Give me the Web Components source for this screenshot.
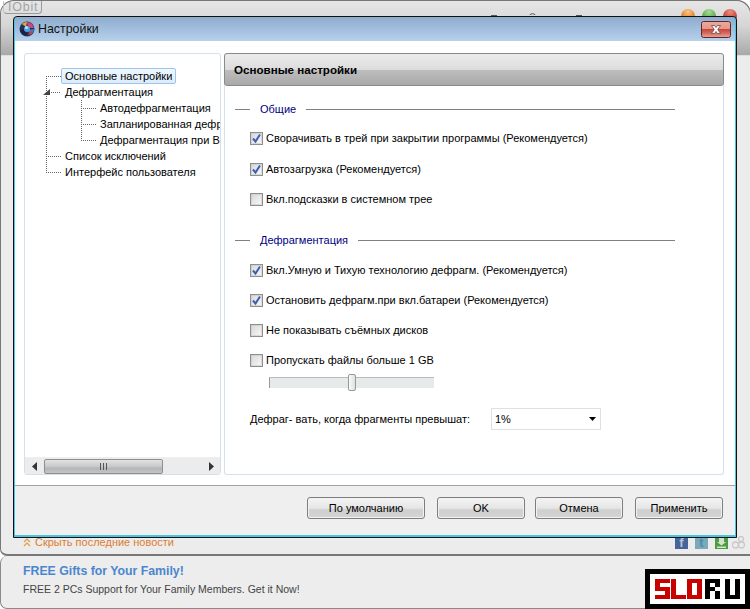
<!DOCTYPE html>
<html>
<head>
<meta charset="utf-8">
<style>
    html, body { margin: 0; padding: 0; background: #fff; }
    body { width: 750px; height: 609px; overflow: hidden; font: 11px "Liberation Sans", sans-serif; color: #000; }
</style>
</head>
<body>
<app-shell>
    <settings-dialog slot="dialog">
        <tree-view slot="tree">
            <tree-item selected>Основные настройки</tree-item>
            <tree-item expanded>
                <span slot="label">Дефрагментация</span>
                <tree-item>Автодефрагментация</tree-item>
                <tree-item>Запланированная дефрагментация</tree-item>
                <tree-item>Дефрагментация при Включении</tree-item>
            </tree-item>
            <tree-item>Список исключений</tree-item>
            <tree-item>Интерфейс пользователя</tree-item>
        </tree-view>
        <options-page slot="page" heading="Основные настройки">
            <option-group heading="Общие">
                <check-row checked style="margin:-1px 0 1px">Сворачивать в трей при закрытии программы (Рекомендуется)</check-row>
                <check-row checked>Автозагрузка (Рекомендуется)</check-row>
                <check-row>Вкл.подсказки в системном трее</check-row>
            </option-group>
            <option-group heading="Дефрагментация" style="margin-top:25px">
                <check-row checked>Вкл.Умную и Тихую технологию дефрагм. (Рекомендуется)</check-row>
                <check-row checked>Остановить дефрагм.при вкл.батареи (Рекомендуется)</check-row>
                <check-row>Не показывать съёмных дисков</check-row>
                <check-row>Пропускать файлы больше 1 GB</check-row>
                <size-slider></size-slider>
                <drop-select label="Дефраг- вать, когда фрагменты превышат:" value="1%"></drop-select>
            </option-group>
        </options-page>
        <push-button slot="buttons" style="width:118px">По умолчанию</push-button>
        <push-button slot="buttons" style="width:88px;margin-left:12px">OK</push-button>
        <push-button slot="buttons" style="width:88px;margin-left:10px">Отмена</push-button>
        <push-button slot="buttons" style="width:88px;margin-left:12px">Применить</push-button>
    </settings-dialog>
</app-shell>

<script>
class AppShell extends HTMLElement {
    constructor () {
        super();
        this
            .attachShadow({mode: 'open'})
            .innerHTML = /*html*/`
                <style>
                    :host { display: block; position: relative; width: 750px; height: 609px; overflow: hidden; }
                    #main {
                        box-sizing: border-box;
                        height: 556px;
                        border: 1px solid #777;
                        border-width: 1px 0 2px 1px;
                        border-radius: 14px 14px 0 7px;
                        background: linear-gradient(#ebebeb 0, #dedede 55px, #ececec 55px);
                        position: relative;
                    }
                    #header {
                        height: 54px;
                        border-radius: 14px 14px 0 0;
                        background: linear-gradient(#e6e6e6, #d6d6d6 45%, #a9a9a9);
                        position: relative;
                        box-shadow: 1px -1px 0 #777;
                    }
                    #logo {
                        position: absolute;
                        left: 2px;
                        top: 0;
                        padding: 0 3px 0 4px;
                        height: 12px;
                        font: 12.500px/12px "Liberation Sans", sans-serif;
                        color: #a4a4a4;
                        border: 1px solid #9a9a9a;
                        border-top: 0;
                        border-left-color: #c4c4c4;
                        border-radius: 0 0 4px 4px;
                        letter-spacing: 0.8px;
                    }
                    #orbs { position: absolute; left: 480px; top: 0; }
                    #news {
                        display: flex;
                        align-items: center;
                        padding: 537px 0 0 22px;
                        position: absolute;
                        left: 0; top: -1px;
                        width: 722px;
                        height: 11px;
                        color: #df7c30;
                        font-size: 11px;
                        box-sizing: content-box;
                    }
                    #news svg { margin-right: 4px; }
                    #hide { margin-top: -2px; }
                    #social { margin-left: auto; display: flex; gap: 7px; align-items: center; }
                    #social svg { margin-right: 0; }
                    .soc {
                        width: 13px; height: 13px;
                        display: flex; align-items: center; justify-content: center;
                        color: #b9c2cf; font: bold 13px/13px "Liberation Sans", sans-serif;
                    }
                    #bottom {
                        box-sizing: border-box;
                        height: 53px;
                        border: 1px solid #8a8a8a;
                        border-width: 0 0 1px 1px;
                        border-radius: 7px 0 0 7px;
                        background: #ededed;
                        display: flex;
                        padding-left: 22px;
                        position: relative;
                    }
                    #promo h1 {
                        margin: 7px 0 0;
                        color: #4a86cf;
                        font: bold 12.300px/16px "Liberation Sans", sans-serif;
                    }
                    #promo p { margin: 3px 0 0; color: #444; font-size: 10.500px; line-height: 15px; }
                    #slo { position: absolute; right: 0; bottom: -1px; }
                    ::slotted([slot=dialog]) { position: absolute; left: 13px; top: 16px; }
                </style>
                <div id="main">
                    <div id="header">
                        <div id="logo">IObit</div>
                        <svg id="orbs" width="269" height="30" viewBox="0 0 269 30">
                            <defs>
                                <radialGradient id="o" cx=".5" cy=".2" r=".8"><stop offset="0" stop-color="#f9c97b"/><stop offset="1" stop-color="#d85a16"/></radialGradient>
                                <radialGradient id="g" cx=".5" cy=".2" r=".8"><stop offset="0" stop-color="#a8dd96"/><stop offset="1" stop-color="#3c8e2a"/></radialGradient>
                                <radialGradient id="r" cx=".5" cy=".2" r=".8"><stop offset="0" stop-color="#ee8e7e"/><stop offset="1" stop-color="#ae2318"/></radialGradient>
                            </defs>
                            <path d="M10 14.500h6M49 14a2 1 0 0 1 5 0M95 14.500h6M98 14v1" stroke="#555" fill="none"/>
                            <circle cx="207" cy="15" r="7" fill="url(#o)"/>
                            <circle cx="228" cy="15" r="7" fill="url(#g)"/>
                            <circle cx="249" cy="15" r="7" fill="url(#r)"/>
                        </svg>
                    </div>
                    <div id="news">
                        <svg width="8" height="9" viewBox="0 0 8 9"><path d="M1 4l3-3 3 3M1 8l3-3 3 3" stroke="#e9a04e" stroke-width="1.3" fill="none"/></svg>
                        <span id="hide">Скрыть последние новости</span>
                        <div id="social">
                            <span class="soc" style="background:#46659c">f</span>
                            <span class="soc" style="background:#79aabc;color:#4f89a8">t</span>
                            <svg width="13" height="13" viewBox="0 0 13 13"><rect width="13" height="13" fill="#4c9c45"/><path d="M4 2h5v4h2L6.500 9.500 2 6h2zM2 10.500h9V12H2z" fill="#d3e3c8"/></svg>
                            <svg width="13" height="13" viewBox="0 0 13 13" style="margin-left:-3px"><g fill="none" stroke="#c8c8c8" stroke-width="1.300"><circle cx="3.500" cy="9" r="3"/><circle cx="9.500" cy="9" r="3"/><circle cx="9" cy="3" r="2.500"/></g></svg>
                        </div>
                    </div>
                </div>
                <div id="bottom">
                    <div id="promo">
                        <h1>FREE Gifts for Your Family!</h1>
                        <p>FREE 2 PCs Support for Your Family Members. Get it Now!</p>
                    </div>
                    <slo-logo id="slo"></slo-logo>
                </div>
                <slot name="dialog"></slot>`;
    }
}

class SloLogo extends HTMLElement {
    constructor () {
        super();
        // pixel letters, 3 cells by 5 rows, with the left offset of each
        const letters = [
            ['111100111001111', '#c80000', 10],
            ['100100100100111', '#c80000', 26],
            ['111101101101111', '#c80000', 42],
            ['111101110101101', '#000', 60],
            ['101101101101111', '#000', 80]
        ];
        let rects = '';
        letters.forEach(([bits, color, x]) => {
            [...bits].forEach((bit, i) => {
                if (bit === '1') {
                    rects += `<rect x="${x + (i % 3) * 5}" y="${10 + Math.floor(i / 3) * 4}" width="5" height="4" fill="${color}"/>`;
                }
            });
        });
        this
            .attachShadow({mode: 'open'})
            .innerHTML = /*html*/`
                <style>
                    :host { display: block; width: 105px; height: 40px; }
                    svg { display: block; }
                </style>
                <svg width="105" height="40" viewBox="0 0 105 40">
                    <rect width="105" height="40" fill="#000"/>
                    <rect x="5" y="5" width="95" height="30" fill="#fff"/>
                    ${rects}
                </svg>`;
    }
}

class SettingsDialog extends HTMLElement {
    constructor () {
        super();
        this
            .attachShadow({mode: 'open'})
            .innerHTML = /*html*/`
                <style>
                    :host {
                        display: flex;
                        flex-direction: column;
                        box-sizing: border-box;
                        width: 724px;
                        height: 522px;
                        border: 1px solid #111;
                        border-radius: 4px 4px 0 0;
                        background: #4cc4e4;
                        padding: 0 1px 2px 1px;
                    }
                    #title {
                        height: 24px;
                        display: flex;
                        align-items: center;
                        gap: 3px;
                        padding-left: 4px;
                        background: linear-gradient(#8facce, #b6d1ec);
                        font-size: 12.400px;
                        color: #111;
                        border-radius: 3px 3px 0 0;
                    }
                    #close {
                        margin-left: auto;
                        margin-right: 4px;
                        display: block;
                    }
                    #body {
                        height: 444px;
                        box-sizing: border-box;
                        padding: 12px 11px 10px 9px;
                        background: #fff;
                        display: flex;
                        gap: 3px;
                    }
                    #foot {
                        flex: 1;
                        box-sizing: border-box;
                        border-top: 1px solid #a3a3a3;
                        background: #efefef;
                        padding: 11px 12px 0 0;
                        display: flex;
                        justify-content: flex-end;
                        align-items: flex-start;
                    }
                </style>
                <div id="title">
                    <svg width="16" height="16" viewBox="0 0 16 16">
                        <circle cx="8" cy="8" r="7.500" fill="#20325c"/>
                        <path d="M8 1a7 7 0 0 1 7 6L9 7z" fill="#c84a7a"/>
                        <path d="M15 8a7 7 0 0 1-4 6L9 9z" fill="#3f7fd8"/>
                        <path d="M3 3a7 7 0 0 1 5-2L7 6z" fill="#e8a63a"/>
                        <path d="M1 9l5-1 2 6a7 7 0 0 1-7-5z" fill="#17233f"/>
                        <path d="M9 14l2-4 3 1a7 7 0 0 1-5 3z" fill="#d83a2a"/>
                        <circle cx="8" cy="8" r="3" fill="#4aa2e0"/>
                        <circle cx="7.500" cy="6.500" r="1.500" fill="#c8e4f8"/>
                    </svg>
                    <span>Настройки</span>
                    <svg id="close" width="30" height="17" viewBox="0 0 30 17">
                        <defs>
                            <linearGradient id="cl" x1="0" y1="0" x2="0" y2="1">
                                <stop offset="0" stop-color="#eda99c"/>
                                <stop offset=".45" stop-color="#e59889"/>
                                <stop offset=".5" stop-color="#c9463c"/>
                                <stop offset=".7" stop-color="#d2665a"/>
                                <stop offset="1" stop-color="#eca69a"/>
                            </linearGradient>
                        </defs>
                        <rect x=".5" y=".5" width="29" height="16" rx="2" fill="url(#cl)" stroke="#5c2a2a"/>
                        <path d="M10.500 4.500h3l1.500 2 1.500-2h3L16.800 8.500 19.500 12.500h-3L15 10.500 13.500 12.500h-3L13.200 8.500z" fill="#fff" stroke="#6a4a4a" stroke-width=".8"/>
                    </svg>
                </div>
                <div id="body">
                    <slot name="tree"></slot>
                    <slot name="page"></slot>
                </div>
                <div id="foot"><slot name="buttons"></slot></div>`;
    }
}

class TreeView extends HTMLElement {
    constructor () {
        super();
        this
            .attachShadow({mode: 'open'})
            .innerHTML = /*html*/`
                <style>
                    :host {
                        display: flex;
                        flex-direction: column;
                        box-sizing: border-box;
                        width: 197px;
                        height: 422px;
                        border: 1px solid #d6e0ea;
                        border-radius: 3px;
                        background: #fff;
                        overflow: hidden;
                    }
                    #list {
                        flex: 1;
                        padding: 14px 0 0 21px;
                        position: relative;
                        overflow: hidden;
                    }
                    #rail {
                        position: absolute;
                        left: 21px;
                        top: 22px;
                        height: 96px;
                        width: 1px;
                        background: repeating-linear-gradient(#666 0 1px, transparent 1px 2px);
                    }
                    #bar {
                        height: 16px;
                        display: flex;
                        align-items: center;
                        background: #ececec;
                        border-top: 1px solid #eee;
                        padding: 0 6px 0 7px;
                    }
                    #thumb {
                        box-sizing: border-box;
                        width: 119px;
                        height: 15px;
                        margin-left: 7px;
                        border: 1px solid #8f8f8f;
                        border-radius: 2px;
                        background: linear-gradient(#e2e2e2, #c6c6c6 55%, #b4b4b4 60%, #c4c4c4);
                        display: flex;
                        align-items: center;
                        justify-content: center;
                    }
                    #thumb svg { display: block; }
                    #right { margin-left: auto; }
                </style>
                <div id="list"><div id="rail"></div><slot></slot></div>
                <div id="bar">
                    <svg width="5" height="9" viewBox="0 0 5 9"><path d="M5 0v9L0 4.500z" fill="#333"/></svg>
                    <div id="thumb">
                        <svg width="8" height="7" viewBox="0 0 8 7"><path d="M0.500 0v7M3.500 0v7M6.500 0v7" stroke="#555"/></svg>
                    </div>
                    <svg id="right" width="5" height="9" viewBox="0 0 5 9"><path d="M0 0v9l5-4.500z" fill="#333"/></svg>
                </div>`;
    }
}

class TreeItem extends HTMLElement {
    constructor () {
        super();
        this
            .attachShadow({mode: 'open'})
            .innerHTML = /*html*/`
                <style>
                    :host { display: block; position: relative; white-space: nowrap; }
                    #row { height: 16px; display: flex; align-items: center; position: relative; }
                    #dash {
                        width: 15px;
                        height: 1px;
                        flex: none;
                        background: repeating-linear-gradient(to right, #666 0 1px, transparent 1px 2px);
                    }
                    #label {
                        box-sizing: border-box;
                        height: 16px;
                        line-height: 14px;
                        padding: 0 3px;
                        border: 1px solid transparent;
                        border-radius: 2px;
                    }
                    :host([selected]) #label {
                        border-color: #9dc4ec;
                        background: linear-gradient(#f0f7fe, #dcecfb);
                    }
                    #expander { display: none; position: absolute; left: -3px; top: 5px; }
                    :host([expanded]) #expander { display: block; }
                    :host([expanded]) #dash { margin-left: 5px; width: 10px; }
                    #kids { display: none; padding-left: 35px; position: relative; }
                    :host([expanded]) #kids { display: block; }
                    #kids::before {
                        content: '';
                        position: absolute;
                        left: 35px;
                        top: 0;
                        height: 40px;
                        width: 1px;
                        background: repeating-linear-gradient(#666 0 1px, transparent 1px 2px);
                    }
                </style>
                <div id="row">
                    <svg id="expander" width="7" height="7" viewBox="0 0 7 7"><path d="M7 0v6H0z" fill="#444"/></svg>
                    <span id="dash"></span>
                    <span id="label"><slot name="label"></slot><slot id="own"></slot></span>
                </div>
                <div id="kids"><slot id="sub"></slot></div>`;
        // a node with children gets its text from the label slot, the rest goes below it
        if (this.hasAttribute('expanded')) {
            this.shadowRoot.querySelector('#own').remove();
        } else {
            this.shadowRoot.querySelector('#sub').remove();
        }
    }
}

class OptionsPage extends HTMLElement {
    constructor () {
        super();
        this
            .attachShadow({mode: 'open'})
            .innerHTML = /*html*/`
                <style>
                    :host {
                        display: block;
                        box-sizing: border-box;
                        width: 500px;
                        height: 422px;
                        border: 1px solid #d6e0ea;
                        border-top: 0;
                        border-radius: 3px;
                    }
                    h2 {
                        box-sizing: border-box;
                        height: 33px;
                        margin: 0 -1px 15px -1px;
                        padding-left: 9px;
                        border: 1px solid #8a8a8a;
                        border-radius: 3px;
                        background: linear-gradient(#ececec, #dcdcdc 50%, #bebebe 50%, #a9a9a9);
                        font: bold 11.600px/32px "Liberation Sans", sans-serif;
                        color: #000;
                    }
                    #content { padding: 0 48px 0 10px; }
                </style>
                <h2></h2>
                <div id="content"><slot></slot></div>`;
        this.shadowRoot.querySelector('h2').textContent = this.getAttribute('heading');
    }
}

class OptionGroup extends HTMLElement {
    constructor () {
        super();
        this
            .attachShadow({mode: 'open'})
            .innerHTML = /*html*/`
                <style>
                    :host { display: block; }
                    #legend {
                        display: flex;
                        align-items: center;
                        height: 16px;
                        gap: 10px;
                        color: #000080;
                    }
                    #legend::before { content: ''; width: 15px; height: 1px; background: #808080; }
                    #legend::after { content: ''; flex: 1; height: 1px; background: #808080; }
                    #rows {
                        display: flex;
                        flex-direction: column;
                        gap: 14px;
                        padding: 14px 0 0 15px;
                    }
                </style>
                <div id="legend"></div>
                <div id="rows"><slot></slot></div>`;
        this.shadowRoot.querySelector('#legend').textContent = this.getAttribute('heading');
    }
}

class CheckRow extends HTMLElement {
    constructor () {
        super();
        this
            .attachShadow({mode: 'open'})
            .innerHTML = /*html*/`
                <style>
                    :host { display: flex; align-items: center; gap: 3px; height: 16px; white-space: nowrap; }
                    svg { flex: none; display: block; }
                    #mark { display: none; }
                    :host([checked]) #mark { display: block; }
                </style>
                <svg width="13" height="13" viewBox="0 0 13 13">
                    <defs>
                        <linearGradient id="bx" x1="0" y1="0" x2="1" y2="1">
                            <stop offset="0" stop-color="#d6d6d6"/>
                            <stop offset="1" stop-color="#fbfbfb"/>
                        </linearGradient>
                    </defs>
                    <rect x=".5" y=".5" width="12" height="12" fill="url(#bx)" stroke="#8e8f8f"/>
                    <rect x="1.500" y="1.500" width="10" height="10" fill="none" stroke="#c9c9c9" stroke-width=".6"/>
                    <path id="mark" d="M3 6.500l2.500 3 4.500-7" fill="none" stroke="#3c5fb4" stroke-width="2"/>
                </svg>
                <span><slot></slot></span>`;
    }
}

class SizeSlider extends HTMLElement {
    constructor () {
        super();
        this
            .attachShadow({mode: 'open'})
            .innerHTML = /*html*/`
                <style>
                    :host { display: block; margin: -8px 0 0 19px; width: 165px; height: 17px; position: relative; }
                    #track {
                        box-sizing: border-box;
                        position: absolute;
                        left: 0; right: 0; top: 3px;
                        height: 11px;
                        background: #e6eaea;
                        border-left: 1px solid #999;
                        border-top: 1px solid #bbb;
                    }
                    #thumb {
                        box-sizing: border-box;
                        position: absolute;
                        left: 79px; top: 0;
                        width: 8px; height: 17px;
                        border: 1px solid #999;
                        border-radius: 2px;
                        background: linear-gradient(to right, #fafafa, #e0e0e0);
                    }
                </style>
                <div id="track"></div>
                <div id="thumb"></div>`;
    }
}

class DropSelect extends HTMLElement {
    constructor () {
        super();
        this
            .attachShadow({mode: 'open'})
            .innerHTML = /*html*/`
                <style>
                    :host { display: flex; align-items: center; margin-top: 3px; white-space: nowrap; }
                    #label { width: 241px; }
                    #box {
                        box-sizing: border-box;
                        width: 110px;
                        height: 22px;
                        border: 1px solid #e0e0e0;
                        display: flex;
                        align-items: center;
                        justify-content: space-between;
                        padding: 0 4px 0 3px;
                    }
                    svg { display: block; }
                </style>
                <span id="label"></span>
                <div id="box">
                    <span id="value"></span>
                    <svg width="7" height="4" viewBox="0 0 7 4"><path d="M0 0h7L3.500 4z" fill="#000"/></svg>
                </div>`;
        this.shadowRoot.querySelector('#label').textContent = this.getAttribute('label');
        this.shadowRoot.querySelector('#value').textContent = this.getAttribute('value');
    }
}

class PushButton extends HTMLElement {
    constructor () {
        super();
        this
            .attachShadow({mode: 'open'})
            .innerHTML = /*html*/`
                <style>
                    :host {
                        display: flex;
                        align-items: center;
                        justify-content: center;
                        box-sizing: border-box;
                        height: 22px;
                        border: 1px solid #7e7e7e;
                        border-radius: 3px;
                        background: linear-gradient(#f4f4f4, #e6e6e6 50%, #cfcfcf 60%, #d4d4d4);
                        box-shadow: inset 0 0 0 1px #f2f2f2;
                    }
                </style>
                <slot></slot>`;
    }
}

customElements.define('slo-logo', SloLogo);
customElements.define('tree-item', TreeItem);
customElements.define('tree-view', TreeView);
customElements.define('check-row', CheckRow);
customElements.define('size-slider', SizeSlider);
customElements.define('drop-select', DropSelect);
customElements.define('push-button', PushButton);
customElements.define('option-group', OptionGroup);
customElements.define('options-page', OptionsPage);
customElements.define('settings-dialog', SettingsDialog);
customElements.define('app-shell', AppShell);
</script>
</body>
</html>
